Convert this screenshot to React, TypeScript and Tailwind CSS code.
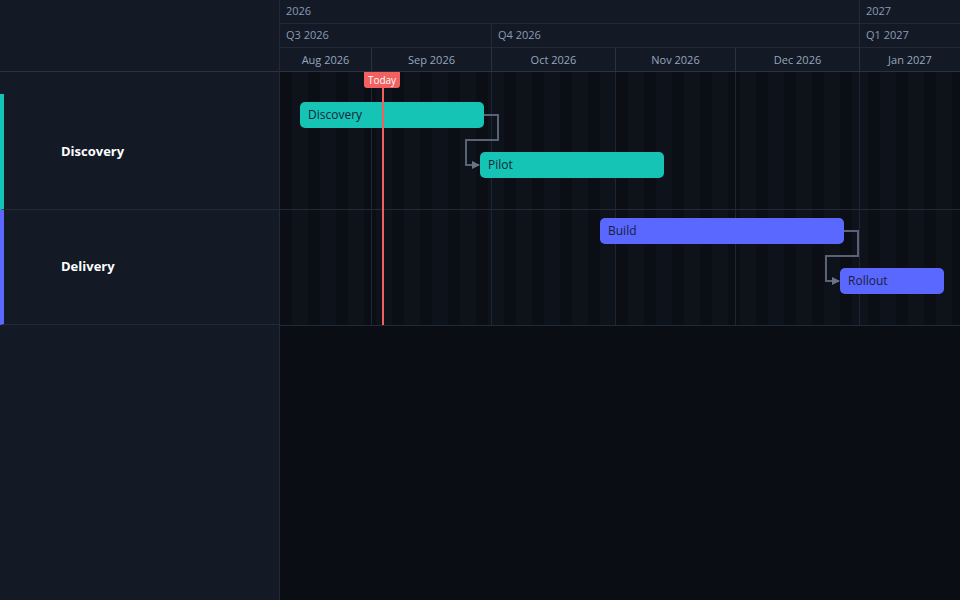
export default function App() {
  const months = [
    { n: "Aug 2026", w: 92 },
    { n: "Sep 2026", w: 120 },
    { n: "Oct 2026", w: 124 },
    { n: "Nov 2026", w: 120 },
    { n: "Dec 2026", w: 124 },
    { n: "Jan 2027", w: 100 },
  ];
  return (
    <div className="w-[960px] h-[600px] flex bg-[#0a0d13] overflow-hidden text-[11px]" style={{ fontFamily: "'Open Sans', 'Noto Sans', sans-serif" }}>
      <div className="w-[280px] shrink-0 bg-[#131925] border-r border-[#222a38] flex flex-col">
        <div className="h-[72px] border-b border-[#2a3242]" />
        <div className="h-[22px]" />
        <div className="h-[116px] flex items-center pl-[57px] border-l-4 border-[#14c4b4] border-b border-b-[#222a38] text-white font-bold text-[13px]">Discovery</div>
        <div className="h-[115px] flex items-center pl-[57px] border-l-4 border-[#5b67ff] border-b border-b-[#222a38] text-white font-bold text-[13px]">Delivery</div>
      </div>
      <div className="flex-1 flex flex-col">
        <div className="h-[72px] bg-[#131925] border-b border-[#2a3242] text-[#8b9bb8]">
          <div className="h-6 flex border-b border-[#222a38]">
            <div className="w-[580px] pl-[6px] flex items-center border-r border-[#222a38]">2026</div>
            <div className="pl-[6px] flex items-center">2027</div>
          </div>
          <div className="h-6 flex border-b border-[#222a38]">
            <div className="w-[212px] pl-[6px] flex items-center border-r border-[#222a38]">Q3 2026</div>
            <div className="w-[368px] pl-[6px] flex items-center border-r border-[#222a38]">Q4 2026</div>
            <div className="pl-[6px] flex items-center">Q1 2027</div>
          </div>
          <div className="h-6 flex text-[#98a6bd]">
            {months.map((m, i) => (
              <div key={m.n} style={{ width: m.w }} className={"shrink-0 flex items-center justify-center " + (i < 5 ? "border-r border-[#2a3242]" : "")}>{m.n}</div>
            ))}
          </div>
        </div>
        <div className="relative h-[254px] border-b border-[#222a38] bg-[repeating-linear-gradient(90deg,#0b0e14_0px,#0b0e14_12px,#0e121a_12px,#0e121a_28px)]">
          <div className="h-[138px] border-b border-[#222a38]" />
          <div className="h-[115px]" />
          <div className="absolute inset-0 flex pointer-events-none">
            {months.map((m, i) => (
              <div key={m.n} style={{ width: m.w }} className={"shrink-0 h-full " + (i < 5 ? "border-r border-[#1f2633]" : "")} />
            ))}
          </div>
          <svg className="absolute inset-0" width="680" height="254">
            <defs>
              <marker id="ah" markerWidth="8" markerHeight="8" refX="7" refY="4" orient="auto" markerUnits="userSpaceOnUse">
                <path d="M0,0 L8,4 L0,8 z" fill="#6b7486" />
              </marker>
            </defs>
            <path d="M204,43 H218 V68 H186 V93 H199" fill="none" stroke="#5a6375" strokeWidth="2" markerEnd="url(#ah)" />
            <path d="M564,159 H578 V184 H546 V209 H559" fill="none" stroke="#5a6375" strokeWidth="2" markerEnd="url(#ah)" />
          </svg>
          <div className="absolute left-[20px] top-[30px] w-[184px] h-[26px] rounded-[5px] bg-[#15c4b4] text-[#13243a] text-[12px] flex items-center pl-2">Discovery</div>
          <div className="absolute left-[200px] top-[80px] w-[184px] h-[26px] rounded-[5px] bg-[#15c4b4] text-[#13243a] text-[12px] flex items-center pl-2">Pilot</div>
          <div className="absolute left-[320px] top-[146px] w-[244px] h-[26px] rounded-[5px] bg-[#5b68ff] text-[#17203a] text-[12px] flex items-center pl-2">Build</div>
          <div className="absolute left-[560px] top-[196px] w-[104px] h-[26px] rounded-[5px] bg-[#5b68ff] text-[#17203a] text-[12px] flex items-center pl-2">Rollout</div>
          <div className="absolute left-[102px] top-0 w-[2px] h-full bg-[#f26060]" />
          <div className="absolute left-[84px] top-0 w-[36px] h-[16px] rounded-b-[3px] bg-[#f26060] text-white text-[10px] flex items-center justify-center">Today</div>
        </div>
      </div>
    </div>
  );
}
